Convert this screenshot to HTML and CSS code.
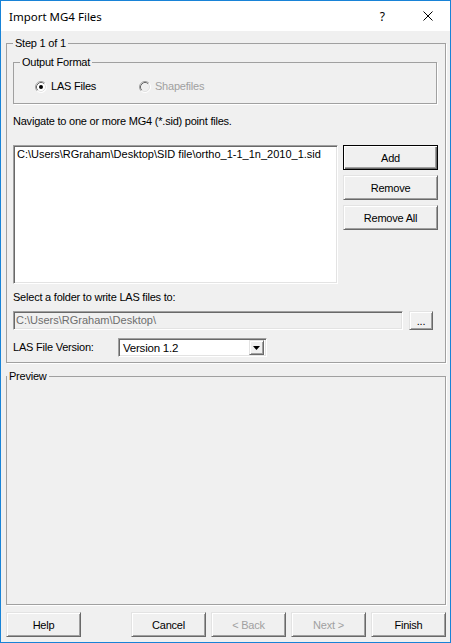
FILE: index.html
```html
<!DOCTYPE html>
<html>
<head>
<meta charset="utf-8">
<title>Import MG4 Files</title>
<link rel="stylesheet" href="styles.css">
</head>
<body>
<div class="window">
  <div class="titlebar">
    <span class="title">Import MG4 Files</span>
    <span class="help">?</span>
    <svg class="close" width="10" height="10" viewBox="0 0 10 10"><path d="M0.5 0.5L9.5 9.5M9.5 0.5L0.5 9.5" stroke="#000" stroke-width="1" fill="none"/></svg>
  </div>
  <div class="content">
    <fieldset class="group step">
      <legend>Step 1 of 1</legend>
      <fieldset class="group format">
        <legend>Output Format</legend>
        <div class="radios">
          <div class="radio">
            <svg width="12" height="12" viewBox="0 0 12 12">
              <circle cx="6" cy="6" r="5.5" fill="#fff"/>
              <path d="M2.11 9.89A5.5 5.5 0 0 1 9.89 2.11" stroke="#a0a0a0" fill="none"/>
              <path d="M9.89 2.11A5.5 5.5 0 0 1 2.11 9.89" stroke="#fff" fill="none"/>
              <path d="M2.82 9.18A4.5 4.5 0 0 1 9.18 2.82" stroke="#696969" fill="none"/>
              <path d="M9.18 2.82A4.5 4.5 0 0 1 2.82 9.18" stroke="#e3e3e3" fill="none"/>
              <circle cx="6" cy="6" r="2" fill="#000"/>
            </svg>
            <span>LAS Files</span>
          </div>
          <div class="radio disabled">
            <svg width="12" height="12" viewBox="0 0 12 12">
              <circle cx="6" cy="6" r="5.5" fill="#f0f0f0"/>
              <path d="M2.11 9.89A5.5 5.5 0 0 1 9.89 2.11" stroke="#a0a0a0" fill="none"/>
              <path d="M9.89 2.11A5.5 5.5 0 0 1 2.11 9.89" stroke="#fff" fill="none"/>
              <path d="M2.82 9.18A4.5 4.5 0 0 1 9.18 2.82" stroke="#696969" fill="none"/>
              <path d="M9.18 2.82A4.5 4.5 0 0 1 2.82 9.18" stroke="#e3e3e3" fill="none"/>
            </svg>
            <span>Shapefiles</span>
          </div>
        </div>
      </fieldset>
      <div class="nav-text">Navigate to one or more MG4 (*.sid) point files.</div>
      <div class="list-row">
        <div class="listbox">
          <div class="item">C:\Users\RGraham\Desktop\SID file\ortho_1-1_1n_2010_1.sid</div>
        </div>
        <div class="side-buttons">
          <div class="btn default">Add</div>
          <div class="btn">Remove</div>
          <div class="btn">Remove All</div>
        </div>
      </div>
      <div class="folder-label">Select a folder to write LAS files to:</div>
      <div class="path-row">
        <div class="textbox disabled">C:\Users\RGraham\Desktop\</div>
        <div class="btn browse">...</div>
      </div>
      <div class="version-row">
        <span class="version-label">LAS File Version:</span>
        <div class="combo">
          <span class="combo-text">Version 1.2</span>
          <div class="combo-btn">
            <svg width="7" height="4" viewBox="0 0 7 4"><path d="M0 0H7L3.5 4Z" fill="#000"/></svg>
          </div>
        </div>
      </div>
    </fieldset>
    <fieldset class="group preview">
      <legend>Preview</legend>
    </fieldset>
    <div class="footer">
      <div class="btn">Help</div>
      <div class="btn push">Cancel</div>
      <div class="btn disabled">&lt; Back</div>
      <div class="btn disabled">Next &gt;</div>
      <div class="btn">Finish</div>
    </div>
  </div>
</div>
</body>
</html>
```

FILE: styles.css
```css
* { box-sizing: border-box; }
html, body { margin: 0; padding: 0; }
body {
  width: 451px;
  height: 643px;
  background: #fff;
  font-family: "Liberation Sans", Arial, sans-serif;
  font-size: 11px;
  letter-spacing: -0.22px;
  color: #000;
}
.window {
  width: 451px;
  height: 643px;
  border: 1px solid #1883d7;
  display: flex;
  flex-direction: column;
  background: #f0f0f0;
}
.titlebar {
  flex: none;
  height: 30px;
  background: #fff;
  display: flex;
  align-items: center;
  letter-spacing: 0;
}
.title {
  flex: 1;
  margin-left: 8px;
  font-family: "Noto Sans", sans-serif;
  font-size: 11.5px;
  color: #000;
}
.help {
  font-family: "Noto Sans", sans-serif;
  font-size: 12px;
  margin-right: 38px;
}
.close {
  margin-right: 17px;
}
.content {
  flex: 1;
  display: flex;
  flex-direction: column;
  padding: 0 4px 5px 5px;
}
.group {
  margin: 0;
  min-width: 0;
  border: 1px solid #a0a0a0;
  box-shadow: 1px 1px 0 #fff;
}
.group > legend {
  padding: 0 2px;
  line-height: 13px;
}
.step {
  margin-top: 6px;
  padding: 0 7px 5px 6px;
}
.format {
  margin: 6px 1px 0 0;
  padding: 0 6px 10px 6px;
}
.radios {
  display: grid;
  grid-template-columns: 104px auto;
  margin: 11px 0 0 15px;
}
.radio {
  display: flex;
  align-items: center;
  gap: 4px;
  height: 13px;
  line-height: 13px;
}
.radio svg { display: block; flex: none; }
.radio.disabled { color: #a0a0a0; }
.nav-text {
  margin-top: 11px;
  line-height: 13px;
}
.list-row {
  display: flex;
  gap: 5px;
  margin-top: 17px;
}
.listbox {
  flex: 1;
  height: 139px;
  background: #fff;
  border: 1px solid;
  border-color: #a0a0a0 #fff #fff #a0a0a0;
  box-shadow: inset 1px 1px 0 #696969, inset -1px -1px 0 #e3e3e3;
  padding: 2px 2px;
}
.item {
  line-height: 13px;
  padding-left: 1px;
  white-space: nowrap;
  letter-spacing: 0;
}
.side-buttons {
  flex: none;
  width: 95px;
  display: flex;
  flex-direction: column;
  gap: 5px;
}
.btn {
  height: 25px;
  display: flex;
  align-items: center;
  justify-content: center;
  background: #f0f0f0;
  border: 1px solid;
  border-color: #e3e3e3 #696969 #696969 #e3e3e3;
  box-shadow: inset 1px 1px 0 #fff, inset -1px -1px 0 #a0a0a0;
  color: #000;
}
.btn.default {
  border-color: #000;
  box-shadow: inset 1px 1px 0 #fff, inset -1px -1px 0 #696969, inset -2px -2px 0 #a0a0a0;
}
.btn.disabled { color: #a0a0a0; }
.folder-label {
  margin-top: 7px;
  line-height: 13px;
}
.path-row {
  display: flex;
  align-items: center;
  gap: 6px;
  margin-top: 7px;
  margin-right: 5px;
}
.textbox {
  flex: 1;
  height: 19px;
  border: 1px solid;
  border-color: #a0a0a0 #fff #fff #a0a0a0;
  box-shadow: inset 1px 1px 0 #696969, inset -1px -1px 0 #e3e3e3;
  padding: 0 2px;
  line-height: 17px;
  background: #fff;
  letter-spacing: 0;
}
.textbox.disabled {
  background: #f0f0f0;
  color: #6d6d6d;
}
.btn.browse {
  flex: none;
  width: 24px;
  height: 19px;
  align-items: flex-end;
  padding-bottom: 3px;
  line-height: 10px;
}
.version-row {
  display: flex;
  align-items: center;
  margin-top: 8px;
}
.version-label {
  width: 105px;
  line-height: 13px;
}
.combo {
  width: 149px;
  height: 19px;
  display: flex;
  align-items: center;
  background: #fff;
  border: 1px solid;
  border-color: #a0a0a0 #fff #fff #a0a0a0;
  box-shadow: inset 1px 1px 0 #696969, inset -1px -1px 0 #e3e3e3;
  padding: 2px;
}
.combo-text {
  flex: 1;
  padding-left: 2px;
  font-size: 11.5px;
}
.combo-btn {
  width: 15px;
  height: 15px;
  display: flex;
  align-items: center;
  justify-content: center;
  background: #f0f0f0;
  border: 1px solid;
  border-color: #e3e3e3 #696969 #696969 #e3e3e3;
  box-shadow: inset 1px 1px 0 #fff, inset -1px -1px 0 #a0a0a0;
}
.combo-btn svg { display: block; }
.preview {
  flex: 1;
  margin-top: 7px;
  padding: 0;
}
.footer {
  flex: none;
  display: flex;
  gap: 5px;
  margin-top: 7px;
}
.footer .btn { width: 75px; }
.footer .btn.push { margin-left: auto; }
```
